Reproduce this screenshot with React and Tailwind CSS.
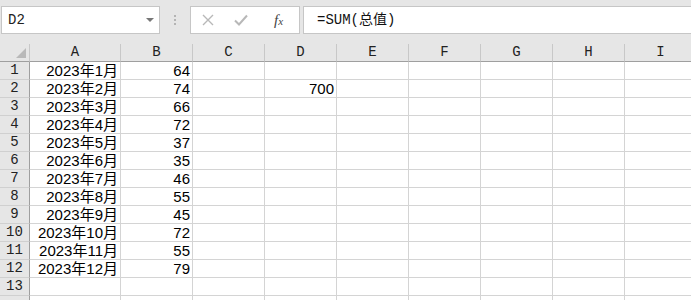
import React from "react";

const cols = ["A", "B", "C", "D", "E", "F", "G", "H", "I"];
const widths = ["w-[91px]", "w-[72px]", "w-[72px]", "w-[72px]", "w-[72px]", "w-[72px]", "w-[72px]", "w-[72px]", "w-[72px]"];
const values = [64, 74, 66, 72, 37, 35, 46, 55, 45, 72, 55, 79];

const mono = { fontFamily: '"Liberation Mono", "Noto Sans CJK SC", monospace' };

function Cell({ w, children }) {
  return (
    <div className={`${w} h-[18px] shrink-0 border-r border-b border-[#d4d4d4] bg-white flex items-end justify-end pr-[2px] text-[15px] leading-[17px] text-black`}>
      {children}
    </div>
  );
}

function Row({ n, label = true }) {
  const i = n - 1;
  return (
    <div className="flex">
      <div
        className="w-[30px] h-[18px] shrink-0 border-r border-b border-r-[#9f9f9f] border-b-[#d0d0d0] bg-[#e6e6e6] flex items-center justify-center text-[14px] text-[#222]"
        style={mono}
      >
        {label ? n : null}
      </div>
      {cols.map((c, k) => (
        <Cell key={c} w={widths[k]}>
          {i < 12 && k === 0 ? `2023年${n}月` : null}
          {i < 12 && k === 1 ? values[i] : null}
          {n === 2 && k === 3 ? 700 : null}
        </Cell>
      ))}
    </div>
  );
}

export default function App() {
  return (
    <div
      className="w-[691px] h-[300px] overflow-hidden bg-[#e6e6e6]"
      style={{ fontFamily: '"Liberation Sans", "Noto Sans CJK SC", sans-serif' }}
    >
      {/* formula bar */}
      <div className="h-[44px] flex items-start pt-[6px] pl-[1px]">
        <div className="w-[159px] h-[28px] bg-white border border-[#c6c6c6] flex items-center justify-between pl-[6px] pr-[5px]">
          <span className="text-[14px] text-[#222]" style={mono}>D2</span>
          <svg width="8" height="5" viewBox="0 0 8 5">
            <path d="M0 0 L8 0 L4 4 Z" fill="#777" />
          </svg>
        </div>
        <div className="w-[30px] h-[28px] flex flex-col items-center justify-center gap-[2px]">
          <span className="w-[2px] h-[2px] bg-[#b4b4b4]" />
          <span className="w-[2px] h-[2px] bg-[#b4b4b4]" />
          <span className="w-[2px] h-[2px] bg-[#b4b4b4]" />
        </div>
        <div className="w-[110px] h-[28px] bg-white border border-[#c6c6c6] flex items-center pl-[11px]">
          <svg width="12" height="12" viewBox="0 0 12 12">
            <path d="M1 1 L11 11 M11 1 L1 11" stroke="#b8b8b8" strokeWidth="1.4" />
          </svg>
          <svg className="ml-[20px]" width="14" height="12" viewBox="0 0 14 12">
            <path d="M1 6.5 L5 10.5 L13 1.5" stroke="#b8b8b8" strokeWidth="2" fill="none" />
          </svg>
          <span className="ml-[26px] text-[15px] italic text-[#444]" style={{ fontFamily: '"Liberation Serif", serif' }}>
            f<span className="text-[11px]">x</span>
          </span>
        </div>
        <div className="ml-[3px] flex-1 h-[28px] bg-white border border-[#c6c6c6] border-r-0 flex items-center pl-[13px]">
          <span className="text-[14px] text-[#111]" style={mono}>=SUM(总值)</span>
        </div>
      </div>

      {/* column headers */}
      <div className="flex">
        <div className="w-[30px] h-[18px] shrink-0 border-r border-b border-r-[#c8c8c8] border-b-[#9f9f9f] bg-[#e6e6e6] flex items-end justify-end pr-[3px] pb-[3px]">
          <svg width="10" height="10" viewBox="0 0 10 10">
            <path d="M10 0 L10 10 L0 10 Z" fill="#b9b9b9" />
          </svg>
        </div>
        {cols.map((c, k) => (
          <div
            key={c}
            className={`${widths[k]} h-[18px] shrink-0 border-r border-b border-r-[#c8c8c8] border-b-[#9f9f9f] bg-[#e6e6e6] flex items-center justify-center text-[14px] text-[#222]`}
            style={mono}
          >
            {c}
          </div>
        ))}
      </div>

      {Array.from({ length: 13 }, (_, i) => (
        <Row key={i} n={i + 1} />
      ))}
      <Row n={14} label={false} />
    </div>
  );
}
